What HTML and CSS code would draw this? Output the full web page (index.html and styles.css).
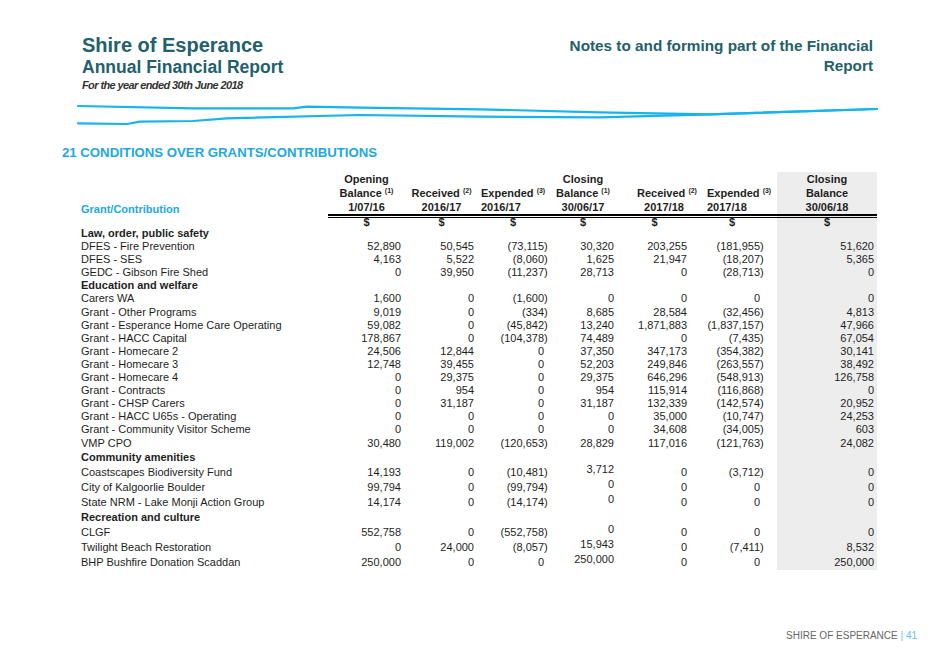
FILE: index.html
```html
<!DOCTYPE html>
<html>
<head>
  <title>Shire of Esperance - Note 21</title>
  <link rel="stylesheet" href="styles.css">
</head>
<body>
  <header class="report-header">
    <div class="titles">
      <h1 class="shire">Shire of Esperance</h1>
      <div class="report-name">Annual Financial Report</div>
      <div class="period">For the year ended 30th June 2018</div>
    </div>
    <div class="notes-title">Notes to and forming part of the Financial<br>Report</div>
  </header>

  <svg class="wave" width="929" height="30" viewBox="0 0 929 30">
    <polyline points="78,8 193,10.3 293,10.3 307,8.7 360,9.7 480,11.3 600,14.3 710,16.3 877,11" />
    <polyline points="78,25.3 127,26 140,23.7 193,23 227,20.3 360,17 480,18.7 600,19.3 710,16.3 877,11" />
  </svg>

  <h2 class="note-heading">21 CONDITIONS OVER GRANTS/CONTRIBUTIONS</h2>

  <table class="grants">
    <colgroup>
      <col style="width: 247px">
      <col style="width: 77px">
      <col style="width: 73px">
      <col style="width: 70px">
      <col style="width: 70px">
      <col style="width: 73px">
      <col style="width: 86px">
      <col style="width: 100px">
    </colgroup>
    <thead>
      <tr>
        <th class="label-head">Grant/Contribution</th>
        <th>Opening<br>Balance <sup>(1)</sup><br>1/07/16</th>
        <th>Received <sup>(2)</sup><br>2016/17</th>
        <th class="left">Expended <sup>(3)</sup><br>2016/17</th>
        <th>Closing<br>Balance <sup>(1)</sup><br>30/06/17</th>
        <th class="shift">Received <sup>(2)</sup><br>2017/18</th>
        <th class="left">Expended <sup>(3)</sup><br>2017/18</th>
        <th>Closing<br>Balance<br>30/06/18</th>
      </tr>
    </thead>
    <tbody>
      <tr class="dollars">
        <td></td><td>$</td><td>$</td><td>$</td><td>$</td><td>$</td><td>$</td><td>$</td>
      </tr>
      <tr class="cat"><td>Law, order, public safety</td><td></td><td></td><td></td><td></td><td></td><td></td><td></td></tr>
      <tr><td>DFES - Fire Prevention</td><td>52,890</td><td>50,545</td><td><span class="neg">(73,115)</span></td><td>30,320</td><td>203,255</td><td><span class="neg">(181,955)</span></td><td>51,620</td></tr>
      <tr><td>DFES - SES</td><td>4,163</td><td>5,522</td><td><span class="neg">(8,060)</span></td><td>1,625</td><td>21,947</td><td><span class="neg">(18,207)</span></td><td>5,365</td></tr>
      <tr><td>GEDC - Gibson Fire Shed</td><td>0</td><td>39,950</td><td><span class="neg">(11,237)</span></td><td>28,713</td><td>0</td><td><span class="neg">(28,713)</span></td><td>0</td></tr>
      <tr class="cat"><td>Education and welfare</td><td></td><td></td><td></td><td></td><td></td><td></td><td></td></tr>
      <tr><td>Carers WA</td><td>1,600</td><td>0</td><td><span class="neg">(1,600)</span></td><td>0</td><td>0</td><td>0</td><td>0</td></tr>
      <tr><td>Grant - Other Programs</td><td>9,019</td><td>0</td><td><span class="neg">(334)</span></td><td>8,685</td><td>28,584</td><td><span class="neg">(32,456)</span></td><td>4,813</td></tr>
      <tr><td>Grant - Esperance Home Care Operating</td><td>59,082</td><td>0</td><td><span class="neg">(45,842)</span></td><td>13,240</td><td>1,871,883</td><td><span class="neg">(1,837,157)</span></td><td>47,966</td></tr>
      <tr><td>Grant - HACC Capital</td><td>178,867</td><td>0</td><td><span class="neg">(104,378)</span></td><td>74,489</td><td>0</td><td><span class="neg">(7,435)</span></td><td>67,054</td></tr>
      <tr><td>Grant - Homecare 2</td><td>24,506</td><td>12,844</td><td>0</td><td>37,350</td><td>347,173</td><td><span class="neg">(354,382)</span></td><td>30,141</td></tr>
      <tr><td>Grant - Homecare 3</td><td>12,748</td><td>39,455</td><td>0</td><td>52,203</td><td>249,846</td><td><span class="neg">(263,557)</span></td><td>38,492</td></tr>
      <tr><td>Grant - Homecare 4</td><td>0</td><td>29,375</td><td>0</td><td>29,375</td><td>646,296</td><td><span class="neg">(548,913)</span></td><td>126,758</td></tr>
      <tr><td>Grant - Contracts</td><td>0</td><td>954</td><td>0</td><td>954</td><td>115,914</td><td><span class="neg">(116,868)</span></td><td>0</td></tr>
      <tr><td>Grant - CHSP Carers</td><td>0</td><td>31,187</td><td>0</td><td>31,187</td><td>132,339</td><td><span class="neg">(142,574)</span></td><td>20,952</td></tr>
      <tr><td>Grant - HACC U65s - Operating</td><td>0</td><td>0</td><td>0</td><td>0</td><td>35,000</td><td><span class="neg">(10,747)</span></td><td>24,253</td></tr>
      <tr><td>Grant - Community Visitor Scheme</td><td>0</td><td>0</td><td>0</td><td>0</td><td>34,608</td><td><span class="neg">(34,005)</span></td><td>603</td></tr>
      <tr><td>VMP CPO</td><td>30,480</td><td>119,002</td><td><span class="neg">(120,653)</span></td><td>28,829</td><td>117,016</td><td><span class="neg">(121,763)</span></td><td>24,082</td></tr>
    </tbody>
    <tbody class="tall">
      <tr class="cat"><td>Community amenities</td><td></td><td></td><td></td><td></td><td></td><td></td><td></td></tr>
      <tr><td>Coastscapes Biodiversity Fund</td><td>14,193</td><td>0</td><td><span class="neg">(10,481)</span></td><td>3,712</td><td>0</td><td><span class="neg">(3,712)</span></td><td>0</td></tr>
      <tr><td>City of Kalgoorlie Boulder</td><td>99,794</td><td>0</td><td><span class="neg">(99,794)</span></td><td>0</td><td>0</td><td>0</td><td>0</td></tr>
      <tr><td>State NRM - Lake Monji Action Group</td><td>14,174</td><td>0</td><td><span class="neg">(14,174)</span></td><td>0</td><td>0</td><td>0</td><td>0</td></tr>
      <tr class="cat"><td>Recreation and culture</td><td></td><td></td><td></td><td></td><td></td><td></td><td></td></tr>
      <tr><td>CLGF</td><td>552,758</td><td>0</td><td><span class="neg">(552,758)</span></td><td>0</td><td>0</td><td>0</td><td>0</td></tr>
      <tr><td>Twilight Beach Restoration</td><td>0</td><td>24,000</td><td><span class="neg">(8,057)</span></td><td>15,943</td><td>0</td><td><span class="neg">(7,411)</span></td><td>8,532</td></tr>
      <tr><td>BHP Bushfire Donation Scaddan</td><td>250,000</td><td>0</td><td>0</td><td>250,000</td><td>0</td><td>0</td><td>250,000</td></tr>
    </tbody>
  </table>

  <footer class="page-footer">SHIRE OF ESPERANCE <span class="page-no">| 41</span></footer>
</body>
</html>
```

FILE: styles.css
```css
body {
  margin: 0;
  padding: 0;
  background-color: #fff;
  font-family: "Liberation Sans", Arial, sans-serif;
  color: #1e1e1e;
  width: 929px;
  height: 657px;
  overflow: hidden;
}

.report-header {
  display: flex;
  justify-content: space-between;
  align-items: flex-start;
  padding: 33px 56px 0 82px;
}

.shire {
  margin: 0;
  font-size: 20px;
  line-height: 24px;
  font-weight: bold;
  color: #22606b;
}

.report-name {
  font-size: 17.5px;
  line-height: 20px;
  font-weight: bold;
  color: #22606b;
}

.period {
  font-size: 11px;
  line-height: 16px;
  font-weight: bold;
  font-style: italic;
  letter-spacing: -0.6px;
  color: #333;
}

.notes-title {
  margin-top: 3px;
  font-size: 15.3px;
  line-height: 20px;
  font-weight: bold;
  text-align: right;
  color: #22606b;
}

.wave {
  display: block;
  margin-top: 5px;
}

.wave polyline {
  fill: none;
  stroke: #16b4ec;
  stroke-width: 2.2;
  stroke-linejoin: round;
  stroke-linecap: round;
}

.note-heading {
  margin: 17px 0 0 62px;
  font-size: 13.2px;
  line-height: 16px;
  font-weight: bold;
  color: #1ca8e2;
}

.grants {
  margin: 11px 0 0 81px;
  width: 796px;
  table-layout: fixed;
  border-collapse: separate;
  border-spacing: 0;
  font-size: 11px;
}

.grants th {
  padding: 0;
  font-weight: bold;
  line-height: 14px;
  text-align: center;
  vertical-align: bottom;
  border-bottom: 2px solid #000;
  white-space: nowrap;
}

.grants th.label-head {
  text-align: left;
  color: #1ca8e2;
  border-bottom: none;
}

.grants th.left {
  text-align: left;
  padding-left: 3px;
}

.grants th:nth-child(7) {
  padding-left: 16px;
}

.grants th.shift {
  padding-left: 19px;
}

.grants sup {
  font-size: 7px;
  line-height: 0;
  vertical-align: 4px;
}

.grants th:nth-child(8) {
  background-color: #ededed;
}

.grants td {
  padding: 0;
  line-height: 13.1px;
  vertical-align: top;
  white-space: nowrap;
}

.grants td:nth-child(n+2) {
  text-align: right;
  padding-right: 4px;
}

.grants td:nth-child(7) {
  padding-right: 17px;
}

.grants td:nth-child(8) {
  padding-right: 3px;
  background-color: #ededed;
}

.neg {
  margin-right: -3.7px;
}

.grants .cat td {
  font-weight: bold;
}

.grants .dollars td {
  font-weight: bold;
  line-height: 9px;
  padding-top: 2px;
}

.grants .dollars td:nth-child(n+2) {
  text-align: center;
  padding-right: 0;
  background-image: linear-gradient(#000, #000);
  background-size: 100% 1px;
  background-position: 0 1px;
  background-repeat: no-repeat;
}

.grants .dollars td:nth-child(7) {
  text-align: left;
  padding-left: 38px;
}

.grants .tall td {
  line-height: 15.1px;
}

.grants .tall td:nth-child(5) {
  line-height: 9px;
}

.page-footer {
  margin-top: 60px;
  padding-right: 12px;
  text-align: right;
  font-size: 10px;
  line-height: 12px;
  color: #666;
}

.page-no {
  color: #5cc3ee;
}
```
